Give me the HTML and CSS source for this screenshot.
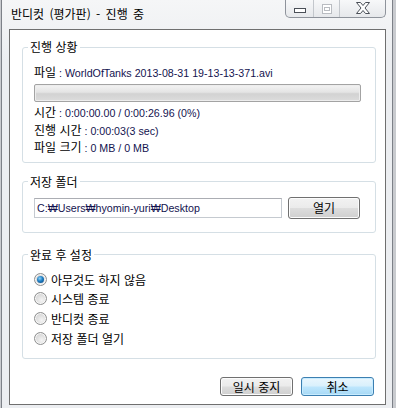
FILE: index.html
```html
<!DOCTYPE html>
<html lang="ko">
<head>
  <meta charset="UTF-8">
  <title>반디컷 (평가판) - 진행 중</title>
  <link rel="stylesheet" href="styles.css">
</head>
<body>
  <div class="window">
    <div class="titlebar">
      <span class="title">반디컷 (평가판) - 진행 중</span>
      <div class="caption">
        <span class="cap cap-min">
          <svg width="12" height="6" viewBox="0 0 12 6"><rect x="0.5" y="0.5" width="11" height="4" fill="#fff" stroke="#4a4f57"/></svg>
        </span>
        <span class="cap cap-max">
          <svg width="10" height="10" viewBox="0 0 10 10"><rect x="0.5" y="0.5" width="9" height="9" fill="#fff" stroke="#b9bcc1"/><rect x="2.5" y="3.5" width="5" height="3" fill="none" stroke="#b9bcc1"/></svg>
        </span>
        <span class="cap cap-close">
          <svg width="14" height="12" viewBox="0 0 14 12"><path d="M0.5 0.5h4l2.5 3 2.5-3h4l-4.5 5.5 4.5 5.5h-4l-2.5-3-2.5 3h-4l4.5-5.5z" fill="#fff" stroke="#4a4f57" stroke-linejoin="round"/></svg>
        </span>
      </div>
    </div>

    <div class="client">
      <fieldset class="group group-progress">
        <legend>진행 상황</legend>
        <div class="info first"><span class="lbl">파일</span><span class="val"> : WorldOfTanks 2013-08-31 19-13-13-371.avi</span></div>
        <div class="bar"></div>
        <div class="info after-bar"><span class="lbl">시간</span><span class="val"> : 0:00:00.00 / 0:00:26.96 (0%)</span></div>
        <div class="info"><span class="lbl">진행 시간</span><span class="val"> : 0:00:03(3 sec)</span></div>
        <div class="info"><span class="lbl">파일 크기</span><span class="val"> : 0 MB / 0 MB</span></div>
      </fieldset>

      <fieldset class="group group-folder">
        <legend>저장 폴더</legend>
        <div class="folder-row">
          <div class="path">C:₩Users₩hyomin-yuri₩Desktop</div>
          <button class="btn btn-open">열기</button>
        </div>
      </fieldset>

      <fieldset class="group group-after">
        <legend>완료 후 설정</legend>
        <label class="option"><span class="radio checked"></span>아무것도 하지 않음</label>
        <label class="option"><span class="radio"></span>시스템 종료</label>
        <label class="option"><span class="radio"></span>반디컷 종료</label>
        <label class="option"><span class="radio"></span>저장 폴더 열기</label>
      </fieldset>

      <div class="actions">
        <button class="btn">일시 중지</button>
        <button class="btn btn-default">취소</button>
      </div>
    </div>
  </div>
</body>
</html>
```

FILE: styles.css
```css
* {
  box-sizing: border-box;
}

body {
  margin: 0;
  background: #c9cbcf;
  font-family: "Noto Sans CJK KR", "Liberation Sans", sans-serif;
  font-size: 12px;
  color: #000;
  overflow: hidden;
}

.window {
  margin-left: 1px;
  width: 392px;
  height: 420px;
  background: linear-gradient(#f5f6f7, #eceef1 60px, #eceef1);
  border: 1px solid #7d8188;
  border-top: none;
}

.titlebar {
  height: 29px;
  display: flex;
  justify-content: space-between;
  align-items: flex-start;
}

.title {
  margin: 6px 0 0 9px;
  font-size: 12px;
  line-height: 16px;
  word-spacing: 2px;
  color: #000;
}

.caption {
  display: flex;
  margin-right: 6px;
  height: 18px;
  border: 1px solid #8e939b;
  border-top: none;
  border-radius: 0 0 5px 5px;
  background: linear-gradient(#f7f8f9, #e6e8eb);
  overflow: hidden;
}

.cap {
  display: flex;
  align-items: center;
  justify-content: center;
  height: 100%;
}

.cap-min {
  width: 28px;
  border-right: 1px solid #c3c7cc;
  padding-top: 4px;
}

.cap-max {
  width: 26px;
  border-right: 1px solid #c3c7cc;
}

.cap-close {
  width: 45px;
  padding-bottom: 2px;
}

.client {
  margin: 0 6px 0 7px;
  height: 376px;
  background: #fff;
  border: 1px solid #6f6f6f;
  display: flex;
  flex-direction: column;
}

.group {
  margin: 0 9px 0 12px;
  padding: 0 14px 0 11px;
  border: 1px solid #d5dfe5;
  border-radius: 3px;
  min-width: 0;
}

.group legend {
  margin-left: -6px;
  padding: 0 2px;
  font-size: 12px;
  line-height: 16px;
}

.group-progress {
  margin-top: 9px;
  padding-bottom: 5px;
}

.info {
  line-height: 16.5px;
  white-space: nowrap;
}

.info.first {
  margin-top: 9px;
  line-height: 16px;
}

.info.after-bar {
  margin-top: 2px;
}

.val {
  font-family: "Liberation Sans", sans-serif;
  font-size: 10.67px;
  color: #13134f;
}

.bar {
  margin-top: 3px;
  height: 18px;
  border: 1px solid #a3a3a3;
  border-radius: 2px;
  background: linear-gradient(#f3f3f3, #e4e4e4 45%, #d2d2d2 55%, #dcdcdc);
  box-shadow: inset 0 0 0 1px #ededed;
}

.group-folder {
  margin-top: 11px;
  padding-right: 15px;
  padding-bottom: 13px;
}

.folder-row {
  margin-top: 7px;
  display: flex;
  align-items: center;
  gap: 6px;
}

.path {
  width: 248px;
  height: 20px;
  padding: 0 2px;
  border: 1px solid #c5cad0;
  border-top-color: #abadb3;
  font-family: "Liberation Sans", sans-serif;
  font-size: 10.67px;
  line-height: 18px;
  color: #13134f;
}

.btn {
  height: 21px;
  padding: 0;
  border: 1px solid #707070;
  border-radius: 3px;
  background: linear-gradient(#f2f2f2, #ebebeb 48%, #dddddd 52%, #cfcfcf);
  box-shadow: inset 0 0 0 1px #fcfcfc;
  font-family: "Noto Sans CJK KR", sans-serif;
  font-size: 12px;
  line-height: 19px;
  color: #000;
}

.btn-open {
  width: 72px;
  height: 22px;
}

.group-after {
  margin-top: 14px;
  padding-top: 7px;
  padding-bottom: 10px;
}

.option {
  display: flex;
  align-items: center;
  gap: 4px;
  height: 19.6px;
}

.radio {
  width: 13px;
  height: 13px;
  border-radius: 50%;
  border: 1px solid #8e8f8f;
  background: radial-gradient(circle at 60% 65%, #f4f4f4, #dcdcdc 55%, #c9c9c9);
  box-shadow: inset 0 0 0 1px #f7f7f7;
  display: flex;
  align-items: center;
  justify-content: center;
}

.radio.checked::after {
  content: "";
  width: 7px;
  height: 7px;
  border-radius: 50%;
  background: radial-gradient(circle at 40% 35%, #8fd2f7, #1e7ec3 45%, #0b3f77);
}

.actions {
  margin: 18px 11px 0 0;
  display: flex;
  justify-content: flex-end;
  gap: 8px;
}

.actions .btn {
  width: 73px;
  height: 19px;
  line-height: 17px;
}

.btn-default {
  border-color: #3c7fb1;
  background: linear-gradient(#eaf6fd, #d9f0fc 48%, #bee6fd 52%, #a7d9f5);
  box-shadow: inset 0 0 0 1px #c8ecff;
}
```
